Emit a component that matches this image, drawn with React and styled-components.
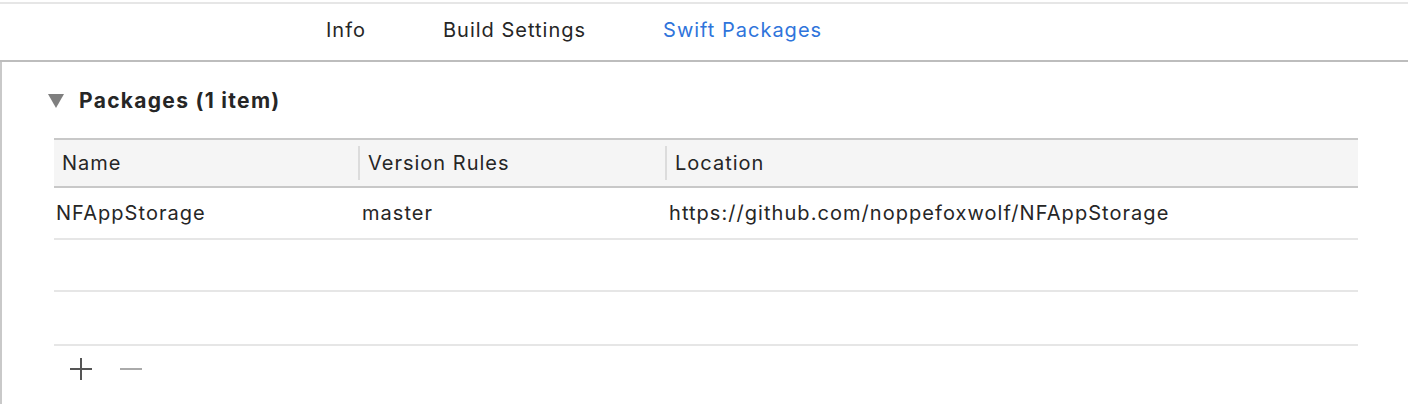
import React from 'react';
import styled, { createGlobalStyle } from 'styled-components';

const GlobalStyle = createGlobalStyle`
  body {
    margin: 0;
    background: #ffffff;
    font-family: Inter, "Noto Sans", sans-serif;
    color: #262626;
  }
`;

const Page = styled.div`
  width: 1408px;
  height: 404px;
  overflow: hidden;
  background: #ffffff;
  padding-top: 2px;
  box-sizing: border-box;
  display: flex;
  flex-direction: column;
`;

const TopRule = styled.div`
  height: 2px;
  background: #e6e6e6;
`;

const TabBar = styled.div`
  height: 58px;
  box-sizing: border-box;
  padding-bottom: 4px;
  display: flex;
  align-items: center;
  gap: 77px;
  padding-left: 326px;
  border-bottom: 2px solid #bdbdbd;
`;

const Tab = styled.span`
  font-size: 20px;
  letter-spacing: 1px;
  color: ${({ active }) => (active ? '#2f74db' : '#262626')};
`;

const Content = styled.div`
  flex: 1;
  border-left: 2px solid #c9c9c9;
  padding: 0 50px 0 52px;
  display: flex;
  flex-direction: column;
`;

const SectionHeader = styled.div`
  height: 76px;
  display: flex;
  align-items: center;
  gap: 15px;
  margin-left: -6px;
`;

const Triangle = styled.span`
  width: 0;
  height: 0;
  border-left: 8.5px solid transparent;
  border-right: 8.5px solid transparent;
  border-top: 14px solid #7f7f7f;
  margin-top: 1px;
`;

const SectionTitle = styled.span`
  font-size: 21px;
  font-weight: 700;
  letter-spacing: 1.3px;
  color: #262626;
`;

const Table = styled.div`
  border-top: 2px solid #c8c8c8;
`;

const Row = styled.div`
  display: grid;
  grid-template-columns: 306px 307px 1fr;
  height: ${({ h }) => h || 50}px;
  align-items: center;
  border-bottom: 2px solid ${({ header }) => (header ? '#c8c8c8' : '#e6e6e6')};
  background: ${({ header }) => (header ? '#f5f5f5' : '#ffffff')};
`;

const HeadCell = styled.div`
  font-size: 20px;
  letter-spacing: 1px;
  color: #262626;
  padding-left: 8px;
  height: 34px;
  display: flex;
  align-items: center;
  border-left: ${({ first }) => (first ? 'none' : '2px solid #dcdcdc')};
  margin-left: ${({ first }) => (first ? '0' : '-2px')};
`;

const Cell = styled.div`
  font-size: 20px;
  letter-spacing: 1.05px;
  color: #262626;
  padding-left: 2px;
  white-space: nowrap;
`;

const Footer = styled.div`
  display: flex;
  align-items: center;
  gap: 28px;
  padding: 12px 0 0 16px;
`;

const IconButton = styled.span`
  width: 22px;
  height: 22px;
  display: flex;
`;

const columns = ['Name', 'Version Rules', 'Location'];
const packages = [
  { name: 'NFAppStorage', rule: 'master', location: 'https://github.com/noppefoxwolf/NFAppStorage' },
];

export default function App() {
  return (
    <Page>
      <GlobalStyle />
      <TopRule />
      <TabBar>
        <Tab>Info</Tab>
        <Tab>Build Settings</Tab>
        <Tab active>Swift Packages</Tab>
      </TabBar>
      <Content>
        <SectionHeader>
          <Triangle />
          <SectionTitle>Packages (1 item)</SectionTitle>
        </SectionHeader>
        <Table>
          <Row header h={46}>
            {columns.map((c, i) => (
              <HeadCell key={c} first={i === 0}>{c}</HeadCell>
            ))}
          </Row>
          {packages.map((p) => (
            <Row key={p.name}>
              <Cell>{p.name}</Cell>
              <Cell>{p.rule}</Cell>
              <Cell>{p.location}</Cell>
            </Row>
          ))}
          <Row />
          <Row h={52} />
        </Table>
        <Footer>
          <IconButton>
            <svg width="22" height="22" viewBox="0 0 22 22">
              <path d="M11 0v22M0 11h22" stroke="#555555" strokeWidth="2" />
            </svg>
          </IconButton>
          <IconButton>
            <svg width="22" height="22" viewBox="0 0 22 22">
              <path d="M0 11h22" stroke="#aaaaaa" strokeWidth="2" />
            </svg>
          </IconButton>
        </Footer>
      </Content>
    </Page>
  );
}
